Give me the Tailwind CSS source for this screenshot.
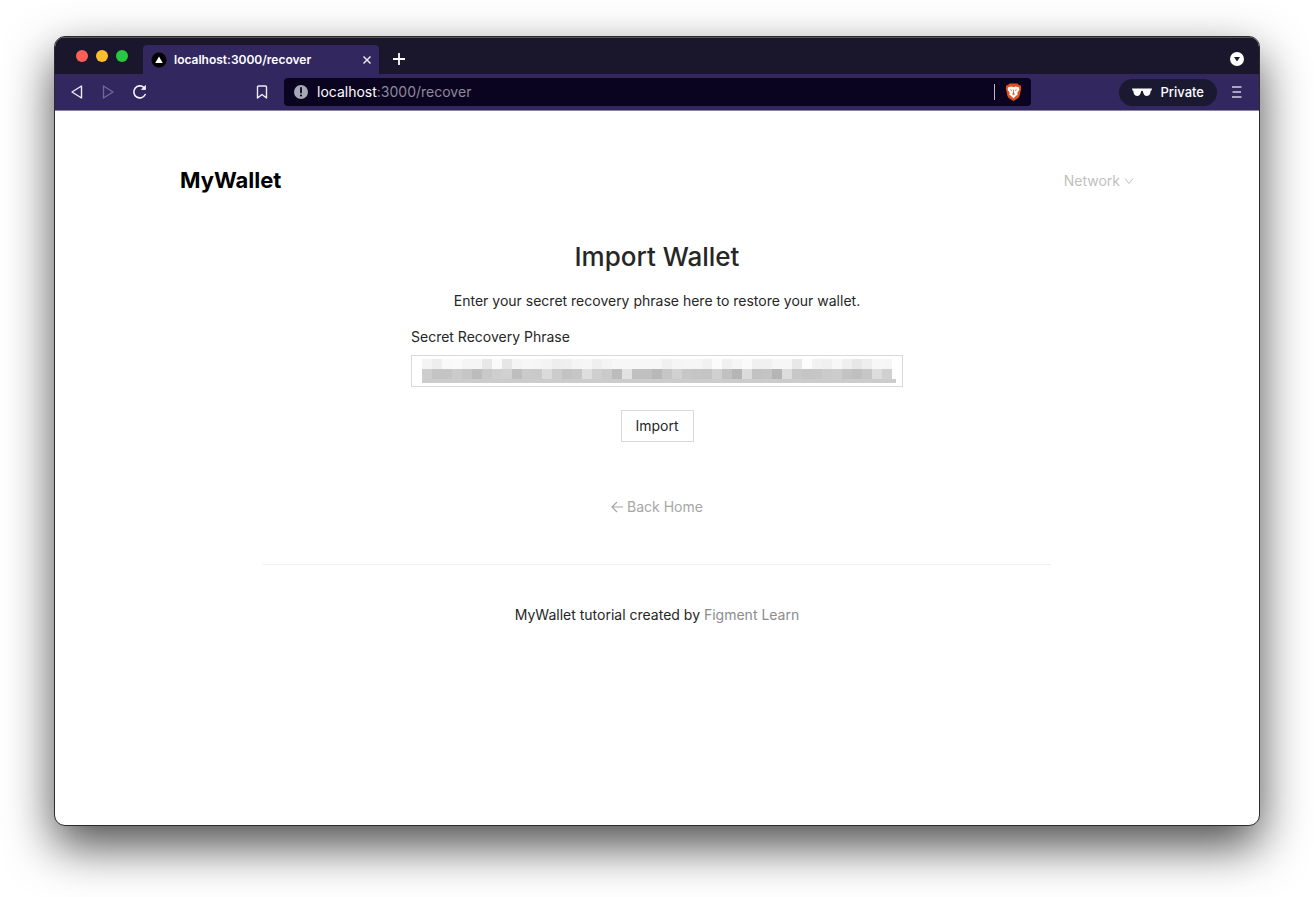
<!DOCTYPE html>
<html lang="en">
<head>
<meta charset="utf-8">
<meta name="viewport" content="width=device-width, initial-scale=1">
<title>MyWallet – Recover</title>
<script src="https://cdn.jsdelivr.net/npm/@tailwindcss/browser@4"></script>
</head>
<body class="flex min-h-screen flex-col bg-white px-[54px] pt-9 pb-[71px] font-[Inter,sans-serif] text-sm text-[#262626]">
<div class="flex flex-1 flex-col overflow-hidden rounded-[11px] border border-[#2b2b2e] bg-white shadow-[0_20px_48px_rgba(0,0,0,0.7)]">
  <!-- Tab strip -->
  <header>
    <div class="flex h-[37px] items-end border-t border-[#55555c] bg-[#1a172c] pr-[15px] pl-[21px] text-white">
      <div class="mb-3 flex gap-2">
        <button aria-label="Close window" class="size-3 rounded-full bg-[#ff5f57]"></button>
        <button aria-label="Minimize window" class="size-3 rounded-full bg-[#febc2e]"></button>
        <button aria-label="Zoom window" class="size-3 rounded-full bg-[#28c840]"></button>
      </div>
      <div class="ml-[15px] flex h-[29px] w-[236px] items-center rounded-t bg-[#32275f] pr-[7px] pl-2">
        <svg class="size-4" viewBox="0 0 16 16" aria-hidden="true"><circle cx="8" cy="8" r="7.5" fill="#000"/><path d="M8 4.5l3.8 6.5H4.2z" fill="#fff"/></svg>
        <span class="ml-[7px] text-xs font-semibold">localhost:3000/recover</span>
        <button aria-label="Close tab" class="ml-auto"><svg class="size-[10px]" viewBox="0 0 10 10" stroke="#e8e6f0" stroke-width="1.5" aria-hidden="true"><path d="M1.5 1.5l7 7M8.5 1.5l-7 7"/></svg></button>
      </div>
      <button aria-label="New tab" class="mb-2 ml-[13px]"><svg class="size-[14px]" viewBox="0 0 14 14" stroke="#fff" stroke-width="1.8" aria-hidden="true"><path d="M7 1v12M1 7h12"/></svg></button>
      <button aria-label="Search tabs" class="mb-2 ml-auto"><svg class="size-[14px]" viewBox="0 0 14 14" aria-hidden="true"><circle cx="7" cy="7" r="7" fill="#fff"/><path d="M4 5h6L7 9.5z" fill="#1a172c"/></svg></button>
    </div>
    <!-- Toolbar -->
    <div class="flex h-[37px] items-center border-b border-[#8a84a5] bg-[#32275f] pr-[17px] pl-[14px] text-white">
      <button aria-label="Back"><svg class="size-4" viewBox="0 0 16 16" fill="none" stroke="#eeecf5" stroke-width="1.4" stroke-linejoin="round" aria-hidden="true"><path d="M12.5 2v12L3 8z"/></svg></button>
      <button aria-label="Forward" disabled class="ml-[15px]"><svg class="size-4" viewBox="0 0 16 16" fill="none" stroke="#71689a" stroke-width="1.4" stroke-linejoin="round" aria-hidden="true"><path d="M3.5 2v12L13 8z"/></svg></button>
      <button aria-label="Reload" class="ml-4"><svg class="size-4" viewBox="0 0 16 16" fill="none" stroke="#f5f4fa" stroke-width="1.6" stroke-linecap="round" aria-hidden="true"><path d="M13.2 10.5A6 6 0 1 1 12 3.600"/><path d="M13.5 1.8v3.700H9.800z" fill="#f5f4fa" stroke-width=".8" stroke-linejoin="round"/></svg></button>
      <button aria-label="Bookmark" class="ml-[106px]"><svg class="size-4" viewBox="0 0 16 16" fill="none" stroke="#eeecf5" stroke-width="1.4" stroke-linejoin="round" aria-hidden="true"><path d="M3.5 3q0-1 1-1h7q1 0 1 1v11L8 10.5 3.5 14z"/></svg></button>
      <div class="ml-[14px] flex h-7 min-w-0 flex-[728] items-center rounded bg-[#0b0420] pr-[9px] pl-[10px]">
        <svg class="size-[14px]" viewBox="0 0 14 14" aria-hidden="true"><circle cx="7" cy="7" r="7" fill="#a6a8b4"/><path d="M7 3v4.6" stroke="#0b0420" stroke-width="1.8" stroke-linecap="round"/><circle cx="7" cy="10.5" r="1.1" fill="#0b0420"/></svg>
        <a href="#" class="ml-[9px] flex-1 text-[#8d8a9b]"><span class="text-white">localhost</span>:3000/recover</a>
        <span class="h-4 w-px bg-[#b9b7c4]"></span>
        <button aria-label="Brave Shields" class="ml-[10px]"><svg class="h-[18px] w-[17px]" viewBox="0 0 17 18" aria-hidden="true"><path d="M4.5.5h8l1.500 1.500 1.800.5.4 3-1.600 7.200q-.4 1.600-2 2.700L8.500 18l-4.100-2.600q-1.600-1.100-2-2.700L.8 5.500l.4-3L3 2z" fill="#e0521f"/><path d="M3.200 4.200l3.200-.6 2.100.6 2.100-.6 3.200.6.6 2.300-2.200 3.500.6 1.600-1.900 1.400-2.400 2.200-2.400-2.200-1.900-1.400.6-1.600L2.600 6.500z" fill="#fff"/><path d="M4.600 6.300l2.500.7-.6 1zM12.400 6.300l-2.500.7.6 1zM8.200 6.500h.6l.2 3.700 1.100.8-1.600 1-1.600-1 1.100-.8z" fill="#e0521f"/></svg></button>
      </div>
      <div class="flex-[88]"></div>
      <button class="flex h-[27px] items-center gap-2 rounded-full bg-[#1b1832] px-[13px] text-[13px] font-medium"><svg class="h-[9px] w-5" viewBox="0 0 20 9" fill="#fff" aria-hidden="true"><path d="M0 .5h20l-.5 2-.8.3C18.500 6 17.500 8 15 8c-2.400 0-3.800-2-4.200-5Q10 2.300 9.200 3C8.800 6 7.400 8 5 8 2.500 8 1.500 6 1.300 2.800L.5 2.500z"/></svg>Private</button>
      <button aria-label="Menu" class="ml-[15px]"><svg class="h-3 w-[10px]" viewBox="0 0 10 12" stroke="#d3d0df" stroke-width="1.5" aria-hidden="true"><path d="M0 1h9.500M.5 6h8.500M0 11h9.500"/></svg></button>
    </div>
  </header>

  <main class="flex flex-col px-[125px] pt-[54px]">
    <div class="flex h-8 items-center justify-between">
      <div class="text-[22px] font-bold text-black">MyWallet</div>
      <button class="flex items-center gap-1 text-[#bfbfbf]">Network<svg class="size-[10px]" viewBox="0 0 10 10" fill="none" stroke="currentColor" aria-hidden="true"><path d="M1 2.5l4 5 4-5"/></svg></button>
    </div>
    <h1 class="mt-[42px] text-center text-[26px] leading-9 font-medium">Import Wallet</h1>
    <p class="mt-4 text-center leading-5">Enter your secret recovery phrase here to restore your wallet.</p>
    <form class="mx-auto mt-4 flex w-full max-w-[492px] flex-col">
      <label for="phrase" class="leading-5">Secret Recovery Phrase</label>
      <div class="relative mt-2">
        <input id="phrase" type="text" class="block h-8 w-full border border-[#d9d9d9] px-[11px] outline-none">
        <div class="pointer-events-none absolute top-1 left-[11px]" aria-hidden="true">
          <div id="light" class="flex h-[10px]"></div>
          <div id="dark" class="flex h-[10px]"></div>
          <div class="h-1 w-[474px] bg-[#cccccc]"></div>
        </div>
      </div>
      <button type="button" class="mx-auto mt-[23px] h-8 w-[73px] border border-[#d9d9d9]">Import</button>
    </form>
    <a href="#" class="mx-auto mt-[55px] flex items-center gap-1 leading-5 text-[#a6a6a6]"><svg class="size-3" viewBox="0 0 12 12" fill="none" stroke="currentColor" stroke-width="1.2" aria-hidden="true"><path d="M12 6H1M6 1L1 6l5 5"/></svg>Back Home</a>
    <hr class="mx-auto mt-[47px] w-full max-w-[788px] border-[#f0f0f0]">
    <p class="mt-10 text-center leading-5">MyWallet tutorial created by <a href="#" class="text-[#8c8c8c]">Figment Learn</a></p>
  </main>
</div>
<script>
  // Grey levels of the censored phrase, one value per 10px tile.
  const rows = {
    light: [244,238,249,250,245,245,231,250,230,244,247,246,243,238,239,245,246,239,244,247,247,247,247,247,240,245,246,246,241,251,240,245,250,240,240,246,246,232,252,242,240,247,239,231,238,247,246],
    dark: [205,196,196,203,198,188,201,207,209,190,202,201,219,204,195,198,222,207,202,188,226,192,192,184,198,209,199,197,196,208,193,181,219,194,196,181,220,200,197,198,203,204,195,191,198,221,208]
  };
  for (const [id, values] of Object.entries(rows)) {
    for (const v of values) {
      const tile = document.createElement("span");
      tile.className = "w-[10px] shrink-0";
      tile.style.backgroundColor = `rgb(${v},${v},${v})`;
      document.getElementById(id).append(tile);
    }
  }
</script>
</body>
</html>
